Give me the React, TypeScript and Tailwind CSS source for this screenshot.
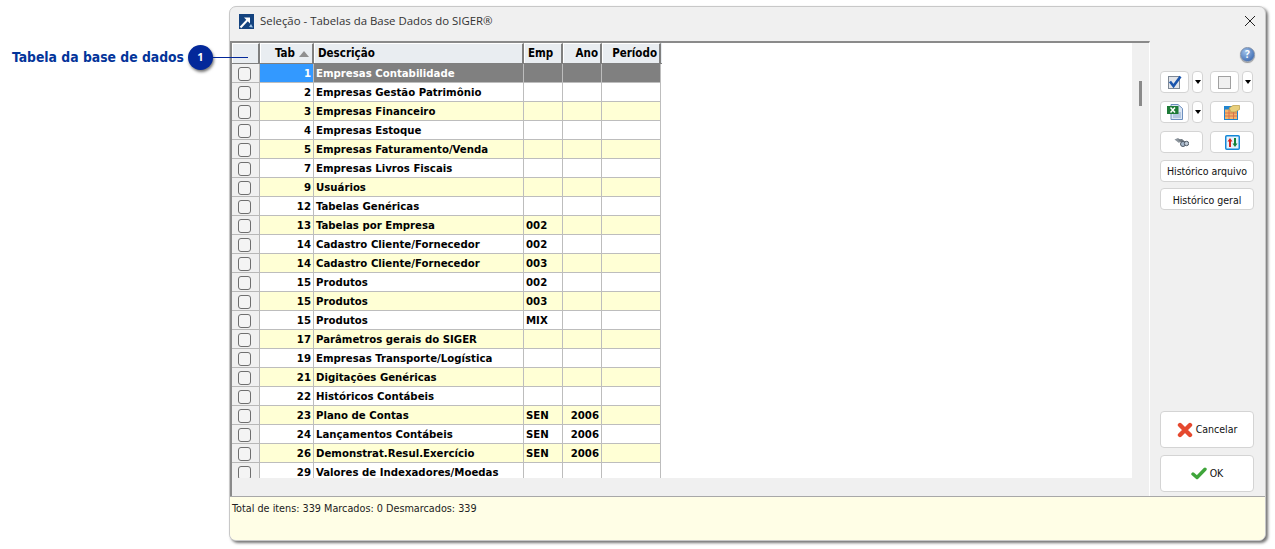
const rows: [string, string, string, string][] = [
  ["1", "Empresas Contabilidade", "", ""],
  ["2", "Empresas Gestão Patrimônio", "", ""],
  ["3", "Empresas Financeiro", "", ""],
  ["4", "Empresas Estoque", "", ""],
  ["5", "Empresas Faturamento/Venda", "", ""],
  ["7", "Empresas Livros Fiscais", "", ""],
  ["9", "Usuários", "", ""],
  ["12", "Tabelas Genéricas", "", ""],
  ["13", "Tabelas por Empresa", "002", ""],
  ["14", "Cadastro Cliente/Fornecedor", "002", ""],
  ["14", "Cadastro Cliente/Fornecedor", "003", ""],
  ["15", "Produtos", "002", ""],
  ["15", "Produtos", "003", ""],
  ["15", "Produtos", "MIX", ""],
  ["17", "Parâmetros gerais do SIGER", "", ""],
  ["19", "Empresas Transporte/Logística", "", ""],
  ["21", "Digitações Genéricas", "", ""],
  ["22", "Históricos Contábeis", "", ""],
  ["23", "Plano de Contas", "SEN", "2006"],
  ["24", "Lançamentos Contábeis", "SEN", "2006"],
  ["26", "Demonstrat.Resul.Exercício", "SEN", "2006"],
  ["29", "Valores de Indexadores/Moedas", "", ""],
];

const ui = { fontFamily: '"Open Sans", "Noto Sans", sans-serif' };
const tahoma = { fontFamily: '"DejaVu Sans Condensed", "DejaVu Sans", sans-serif' };

function Btn({ w, h = "h-[22px]", children }: { w: string; h?: string; children?: React.ReactNode }) {
  return (
    <div className={`${w} ${h} flex items-center justify-center gap-[3px] rounded-[4px] border border-[#d4d4d4] bg-white text-[10.5px] text-[#111] shrink-0 whitespace-nowrap`} style={tahoma}>
      {children}
    </div>
  );
}

function Drop() {
  return (
    <div className="w-[11px] h-[22px] flex items-center justify-center rounded-[4px] border border-[#d4d4d4] bg-white shrink-0">
      <div className="w-0 h-0 border-x-[3.5px] border-x-transparent border-t-[4px] border-t-black" />
    </div>
  );
}

function CheckIcon() {
  return (
    <svg width="14" height="14" viewBox="0 0 14 14" className="ml-px">
      <rect x="0.5" y="1.5" width="11" height="12" fill="#e2e5ea" stroke="#7d8794" />
      <path d="M2 6.5 L5.5 11 L12.5 1.5" fill="none" stroke="#1a55ad" strokeWidth="2.6" />
    </svg>
  );
}

function EmptyIcon() {
  return (
    <svg width="13" height="13" viewBox="0 0 13 13">
      <rect x="0.5" y="0.5" width="12" height="12" fill="#f0f0f0" stroke="#a0a0a0" />
    </svg>
  );
}

function ExcelIcon() {
  return (
    <svg width="16" height="16" viewBox="0 0 16 16">
      <path d="M4 0.5 H11 L15.5 4.5 V15.5 H4 Z" fill="#dbe6f5" stroke="#6d8fbe" />
      <path d="M10 9 H14 M6 11 H14 M6 13 H14" stroke="#8aa6cc" />
      <rect x="0" y="2" width="11.5" height="8" fill="#1d7a37" />
      <path d="M3.5 3.5 L8 8.5 M8 3.5 L3.5 8.5" stroke="#fff" strokeWidth="1.5" />
    </svg>
  );
}

function TableIcon() {
  return (
    <svg width="16" height="15" viewBox="0 0 16 15">
      <rect x="0.5" y="1.5" width="13" height="13" fill="#f3b66b" stroke="#1f84d0" />
      <rect x="0.5" y="1.5" width="13" height="3" fill="#1f84d0" />
      <path d="M5 5 V14 M9.5 5 V14 M1 8 H13 M1 11 H13" stroke="#d9734c" />
      <path d="M5 3 L9 0.5 H15.5 V4.5 L11 7 H7 Z" fill="#e8cf7c" stroke="#b79a45" strokeWidth="0.7" />
    </svg>
  );
}

function BinocularIcon() {
  return (
    <svg width="15" height="9" viewBox="0 0 15 9">
      <path d="M0.5 1.5 L4 0 L7.5 2.5 L5 5 Z" fill="#8d959d" />
      <path d="M4 1.5 L8 1 L11.5 4 L8.5 6 Z" fill="#6f7880" />
      <circle cx="9" cy="6" r="2.5" fill="#a8bacd" stroke="#4f5964" />
      <circle cx="12.5" cy="5.5" r="2.2" fill="#c1ccd8" stroke="#4f5964" />
    </svg>
  );
}

function SortIcon() {
  return (
    <svg width="15" height="15" viewBox="0 0 15 15">
      <rect x="0.75" y="0.75" width="13.5" height="13.5" rx="1" fill="#e6f3fc" stroke="#1488d8" strokeWidth="1.5" />
      <path d="M5 12 V5.5" stroke="#d8261f" strokeWidth="2" />
      <path d="M2.5 6.5 L5 3 L7.5 6.5 Z" fill="#d8261f" />
      <path d="M10 3 V9.5" stroke="#14803a" strokeWidth="2" />
      <path d="M7.5 8.5 L10 12 L12.5 8.5 Z" fill="#14803a" />
    </svg>
  );
}

const headCell = "border-t border-l border-t-white border-l-white border-r-2 border-r-[#7f7f7f] flex items-center pt-px";

export default function App() {
  return (
    <div className="relative w-[1275px] h-[549px] bg-white overflow-hidden pt-[6px] pl-[229px]">
      {/* annotation */}
      <div className="absolute left-[12px] top-[45px] flex items-center z-10">
        <span className="w-[172px] text-[13.8px] font-bold text-[#03349a] whitespace-nowrap" style={tahoma}>Tabela da base de dados</span>
        <div className="ml-[4px] w-[25px] h-[25px] rounded-full bg-[#03289a] flex items-center justify-center text-white text-[11px] font-bold shadow-[1px_2px_3px_rgba(0,0,0,0.55)]" style={ui}>1</div>
        <div className="w-[35px] h-px bg-[#03289a]" />
      </div>

      {/* window */}
      <div className="w-[1037px] h-[535px] flex flex-col rounded-[7px] border border-[#c8c8c8] bg-[#f0f0f0] shadow-[2px_2px_3px_rgba(0,0,0,0.55)] overflow-hidden" style={ui}>
        {/* title */}
        <div className="h-[34px] shrink-0 flex items-center pl-[9px] pr-[10px] pb-[6px] text-[11.4px] text-[#333]">
          <svg width="15" height="15" viewBox="0 0 15 15" className="shrink-0">
            <rect width="15" height="15" fill="#14437f" />
            <path d="M1.5 13.5 L8.5 6" stroke="#fff" strokeWidth="2" fill="none" />
            <path d="M5 3.5 H11 V9.5 Z" fill="#fff" />
            <path d="M10 13 L12 10 L14 13.5 Z" fill="#9fc4e8" />
          </svg>
          <span className="ml-[6px]">Seleção - Tabelas da Base Dados do SIGER®</span>
          <svg width="10" height="10" viewBox="0 0 10 10" className="ml-auto">
            <path d="M0 0 L10 10 M10 0 L0 10" stroke="#222" strokeWidth="1" />
          </svg>
        </div>

        {/* body */}
        <div className="flex-1 min-h-0 flex">
          {/* grid frame */}
          <div className="w-[920px] shrink-0 h-[456px] border-t-2 border-l-2 border-t-[#8a8a8a] border-l-[#8a8a8a] border-r border-r-white flex flex-col bg-[#f0f0f0]">
            <div className="flex-1 min-h-0 flex">
              <div className="w-[900px] h-[435px] shrink-0 bg-white overflow-hidden text-[11.3px] font-bold text-black" style={tahoma}>
                {/* header */}
                <div className="flex h-[21px] w-[430px] bg-[#e9edf1] border-b border-[#7f7f7f] text-[11.5px]">
                  <div className={`w-[28px] ${headCell}`} />
                  <div className={`w-[54px] justify-end pr-[3px] gap-[4px] ${headCell}`}>
                    Tab
                    <div className="w-0 h-0 border-x-[5.5px] border-x-transparent border-b-[6px] border-b-[#8f8f8f]" />
                  </div>
                  <div className={`w-[210px] pl-[3px] ${headCell}`}>Descrição</div>
                  <div className={`w-[39px] pl-[3px] ${headCell}`}>Emp</div>
                  <div className={`w-[39px] justify-end pr-[2px] ${headCell}`}>Ano</div>
                  <div className={`w-[59px] justify-end pr-[2px] ${headCell}`}>Período</div>
                </div>
                {/* rows */}
                {rows.map((r, i) => {
                  const sel = i === 0;
                  const bg = sel ? "bg-[#808080] text-white" : i % 2 === 0 ? "bg-[#ffffd5]" : "bg-white";
                  const cell = "shrink-0 border-r border-b border-[#bdbdbd] flex items-center pt-[2px]";
                  return (
                    <div key={i} className="flex h-[19px] w-[430px]">
                      <div className="w-[28px] shrink-0 bg-[#f0f0f0] border-r border-b border-[#b8b8b8] flex items-start justify-center pt-[3px] pr-[2px]">
                        <div className="w-[13px] h-[14px] rounded-[3px] border border-[#6f6f6f] bg-[#f4f4f4]" />
                      </div>
                      <div className={`w-[54px] ${cell} justify-end pr-[2px] ${sel ? "bg-[#3399ff] text-white" : bg}`}>{r[0]}</div>
                      <div className={`w-[210px] ${cell} pl-[2px] whitespace-nowrap ${bg}`}>{r[1]}</div>
                      <div className={`w-[39px] ${cell} pl-[2px] ${bg}`}>{r[2]}</div>
                      <div className={`w-[39px] ${cell} justify-end pr-[2px] ${bg}`}>{r[3]}</div>
                      <div className={`w-[59px] ${cell} ${bg}`} />
                    </div>
                  );
                })}
              </div>
              {/* vertical scrollbar */}
              <div className="flex-1 flex justify-center pt-[38px]">
                <div className="w-[3px] h-[25px] bg-[#8a8a8a]" />
              </div>
            </div>
            <div className="h-[19px] shrink-0" />
          </div>

          {/* side panel */}
          <div className="flex-1 flex flex-col pl-[10px] pt-[6px]">
            <div className="h-[14px] w-[95px] flex justify-end">
              <div className="w-[15px] h-[15px] rounded-full bg-[radial-gradient(circle_at_35%_30%,#9dbfe8,#2a5aa8)] border border-[#7f8fa8] flex items-center justify-center text-white text-[10px] font-bold shadow-[0_1px_1px_rgba(0,0,0,0.4)]">?</div>
            </div>
            <div className="mt-[10px] flex gap-[3px]">
              <Btn w="w-[29px]"><CheckIcon /></Btn>
              <Drop />
              <Btn w="w-[29px] ml-[4px]"><EmptyIcon /></Btn>
              <Drop />
            </div>
            <div className="mt-[8px] flex gap-[3px]">
              <Btn w="w-[29px]"><ExcelIcon /></Btn>
              <Drop />
              <Btn w="w-[44px] ml-[4px]"><TableIcon /></Btn>
            </div>
            <div className="mt-[8px] flex gap-[7px]">
              <Btn w="w-[43px]"><BinocularIcon /></Btn>
              <Btn w="w-[44px]"><SortIcon /></Btn>
            </div>
            <div className="mt-[7px]"><Btn w="w-[94px]"><span className="pt-[2px]">Histórico arquivo</span></Btn></div>
            <div className="mt-[6px]"><Btn w="w-[94px]"><span className="pt-[3px]">Histórico geral</span></Btn></div>
            <div className="mt-auto mb-[4px] flex flex-col gap-[7px]">
              <Btn w="w-[94px]" h="h-[37px]">
                <svg width="16" height="16" viewBox="0 0 16 16"><path d="M3 3 L13 13 M13 3 L3 13" stroke="#e5492f" strokeWidth="4.4" strokeLinecap="round" /></svg>
                <span>Cancelar</span>
              </Btn>
              <Btn w="w-[94px]" h="h-[37px]">
                <svg width="16" height="13" viewBox="0 0 16 13"><path d="M2 7 L6 10.5 L14 2.2" fill="none" stroke="#3fa53a" strokeWidth="3.4" strokeLinecap="round" strokeLinejoin="round" /></svg>
                <span>OK</span>
              </Btn>
            </div>
          </div>
        </div>

        {/* footer */}
        <div className="h-[44px] shrink-0 bg-[#fffee6] border-t border-[#a8a8a8] pl-[2px] pt-[4px] text-[10.75px] text-[#222]" style={tahoma}>
          Total de itens: 339 Marcados: 0 Desmarcados: 339
        </div>
      </div>
    </div>
  );
}
